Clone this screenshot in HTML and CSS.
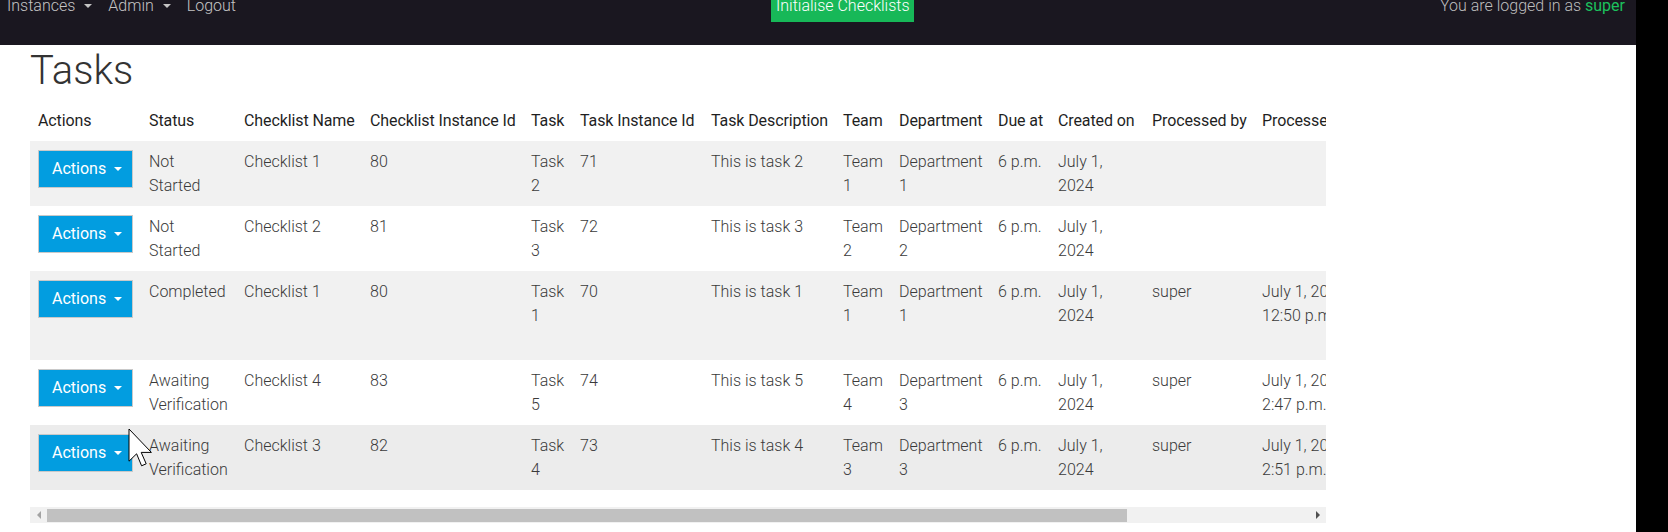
FILE: index.html
```html
<!DOCTYPE html>
<html lang="en">
<head>
<meta charset="utf-8">
<title>Tasks</title>
<link rel="stylesheet" href="styles.css">
</head>
<body>
<div class="page">
  <nav class="navbar">
    <ul class="nav-left">
      <li>Instances<span class="caret"></span></li>
      <li>Admin<span class="caret"></span></li>
      <li>Logout</li>
    </ul>
    <a class="btn-init">Initialise Checklists</a>
    <div class="nav-user">You are logged in as <span class="user">super</span></div>
  </nav>
  <main class="content">
    <h1 class="title">Tasks</h1>
    <div class="table-wrap">
      <table class="tasks">
        <colgroup>
          <col class="c-actions"><col class="c-status"><col class="c-name"><col class="c-iid">
          <col class="c-task"><col class="c-tiid"><col class="c-desc"><col class="c-team">
          <col class="c-dept"><col class="c-due"><col class="c-created"><col class="c-pby">
          <col class="c-pon"><col class="c-vby"><col class="c-note">
        </colgroup>
        <thead>
          <tr>
            <th>Actions</th><th>Status</th><th>Checklist Name</th><th>Checklist Instance Id</th>
            <th>Task</th><th>Task Instance Id</th><th>Task Description</th><th>Team</th>
            <th>Department</th><th>Due at</th><th>Created on</th><th>Processed by</th>
            <th>Processed on</th><th>Verified by</th><th>Notes</th>
          </tr>
        </thead>
        <tbody>
          <tr class="odd">
            <td><button class="btn-actions">Actions<span class="caret"></span></button></td>
            <td>Not Started</td><td>Checklist 1</td><td>80</td><td>Task 2</td><td>71</td>
            <td>This is task 2</td><td>Team 1</td><td>Department 1</td><td>6 p.m.</td>
            <td>July 1, 2024</td><td></td><td></td><td></td><td></td>
          </tr>
          <tr>
            <td><button class="btn-actions">Actions<span class="caret"></span></button></td>
            <td>Not Started</td><td>Checklist 2</td><td>81</td><td>Task 3</td><td>72</td>
            <td>This is task 3</td><td>Team 2</td><td>Department 2</td><td>6 p.m.</td>
            <td>July 1, 2024</td><td></td><td></td><td></td><td></td>
          </tr>
          <tr class="odd">
            <td><button class="btn-actions">Actions<span class="caret"></span></button></td>
            <td>Completed</td><td>Checklist 1</td><td>80</td><td>Task 1</td><td>70</td>
            <td>This is task 1</td><td>Team 1</td><td>Department 1</td><td>6 p.m.</td>
            <td>July 1, 2024</td><td>super</td><td>July 1, 2024, 12:50 p.m.</td>
            <td>super</td><td>All steps done</td>
          </tr>
          <tr>
            <td><button class="btn-actions">Actions<span class="caret"></span></button></td>
            <td>Awaiting Verification</td><td>Checklist 4</td><td>83</td><td>Task 5</td><td>74</td>
            <td>This is task 5</td><td>Team 4</td><td>Department 3</td><td>6 p.m.</td>
            <td>July 1, 2024</td><td>super</td><td>July 1, 2024, 2:47 p.m.</td><td></td><td></td>
          </tr>
          <tr class="hover">
            <td><button class="btn-actions">Actions<span class="caret"></span></button></td>
            <td>Awaiting Verification</td><td>Checklist 3</td><td>82</td><td>Task 4</td><td>73</td>
            <td>This is task 4</td><td>Team 3</td><td>Department 3</td><td>6 p.m.</td>
            <td>July 1, 2024</td><td>super</td><td>July 1, 2024, 2:51 p.m.</td><td></td><td></td>
          </tr>
        </tbody>
      </table>
    </div>
    <div class="hscroll">
      <span class="arrow arrow-left"></span>
      <div class="track"><div class="thumb"></div></div>
      <span class="arrow arrow-right"></span>
    </div>
  </main>
  <svg class="cursor" width="25" height="40" viewBox="0 0 12.5 20" aria-hidden="true">
    <path d="M0.5 0.5 L0.5 16.6 L4.3 12.9 L6.8 18.9 L9.1 17.9 L6.6 12.2 L11.7 12.2 Z" fill="#fff" stroke="#000" stroke-width="0.5" stroke-linejoin="miter"/>
  </svg>
</div>
<div class="edge"></div>
</body>
</html>
```

FILE: styles.css
```css
html, body {
  margin: 0;
  padding: 0;
  height: 100%;
}
body {
  display: flex;
  background: #000;
  font-family: Roboto, "Liberation Sans", Arial, sans-serif;
  font-size: 16px;
  line-height: 24px;
  overflow: hidden;
}
.page {
  position: relative;
  width: 1636px;
  flex: none;
  min-height: 100%;
  background: #fff;
}
.edge {
  flex: 1;
  background: #000;
}

/* navbar */
.navbar {
  height: 45px;
  background: #1a1720;
  display: flex;
  align-items: flex-start;
  overflow: hidden;
}
.nav-left {
  list-style: none;
  margin: -6px 0 0 0;
  padding: 0 0 0 7px;
  display: flex;
  gap: 16px;
  color: #c4c4c4;
  font-weight: 300;
}
.nav-left li {
  display: flex;
  align-items: center;
  height: 24px;
}
.caret {
  display: inline-block;
  width: 0;
  height: 0;
  border-top: 4px solid currentColor;
  border-left: 4px solid transparent;
  border-right: 4px solid transparent;
  margin-left: 9px;
}
.btn-init {
  margin: -6px 0 0 535px;
  padding: 0 4px 4px 5px;
  background: #17b858;
  color: #fff;
  font-weight: 300;
  line-height: 24px;
}
.nav-user {
  margin: -6px 11px 0 auto;
  color: #bdbdbd;
  font-weight: 300;
}
.user {
  color: #1cc15d;
  font-weight: 400;
}

/* content */
.content {
  padding: 0 30px;
}
.title {
  margin: 2px 0 6px 0;
  font-size: 40px;
  line-height: 48px;
  font-weight: 300;
  color: #333;
}
.table-wrap {
  width: 1296px;
  overflow: hidden;
}
.tasks {
  table-layout: fixed;
  border-collapse: collapse;
  width: 1531px;
}
.c-actions { width: 111px; }
.c-status { width: 95px; }
.c-name { width: 126px; }
.c-iid { width: 161px; }
.c-task { width: 49px; }
.c-tiid { width: 131px; }
.c-desc { width: 132px; }
.c-team { width: 56px; }
.c-dept { width: 99px; }
.c-due { width: 60px; }
.c-created { width: 94px; }
.c-pby { width: 110px; }
.c-pon { width: 111px; }
.c-vby { width: 136px; }
.c-note { width: 60px; }

.tasks th {
  text-align: left;
  font-weight: 400;
  color: #1f1f1f;
  padding: 8px 8px 8px;
  vertical-align: bottom;
  white-space: nowrap;
  letter-spacing: -0.1px;
}
.tasks td {
  padding: 9px 8px 8px;
  vertical-align: top;
  font-weight: 300;
  color: #3a3a3a;
}
.tasks tr.odd td { background: #f1f1f1; }
.tasks tr.hover td { background: #ececec; }

.btn-actions {
  display: inline-flex;
  align-items: center;
  box-sizing: border-box;
  width: 95px;
  height: 38px;
  padding: 6px 0 6px 13px;
  margin: 0;
  border: 1px solid #c9c9c9;
  background: #029de0;
  color: #fff;
  font-family: Roboto, "Liberation Sans", Arial, sans-serif;
  font-size: 16px;
  font-weight: 400;
  line-height: 24px;
}
.btn-actions .caret {
  margin-left: 8px;
}

/* fake horizontal scrollbar */
.hscroll {
  width: 1296px;
  height: 16px;
  margin-top: 17px;
  background: #f1f1f1;
  display: flex;
  align-items: center;
}
.arrow {
  flex: none;
  width: 17px;
  display: flex;
  justify-content: center;
}
.arrow-left::before {
  content: "";
  border-right: 4px solid #a3a3a3;
  border-top: 4px solid transparent;
  border-bottom: 4px solid transparent;
}
.arrow-right::before {
  content: "";
  border-left: 4px solid #505050;
  border-top: 4px solid transparent;
  border-bottom: 4px solid transparent;
}
.track {
  flex: 1;
  height: 13px;
  margin-top: 1px;
}
.thumb {
  width: 1080px;
  height: 13px;
  background: #c1c1c1;
}

.cursor {
  position: absolute;
  left: 128px;
  top: 428px;
}
```
